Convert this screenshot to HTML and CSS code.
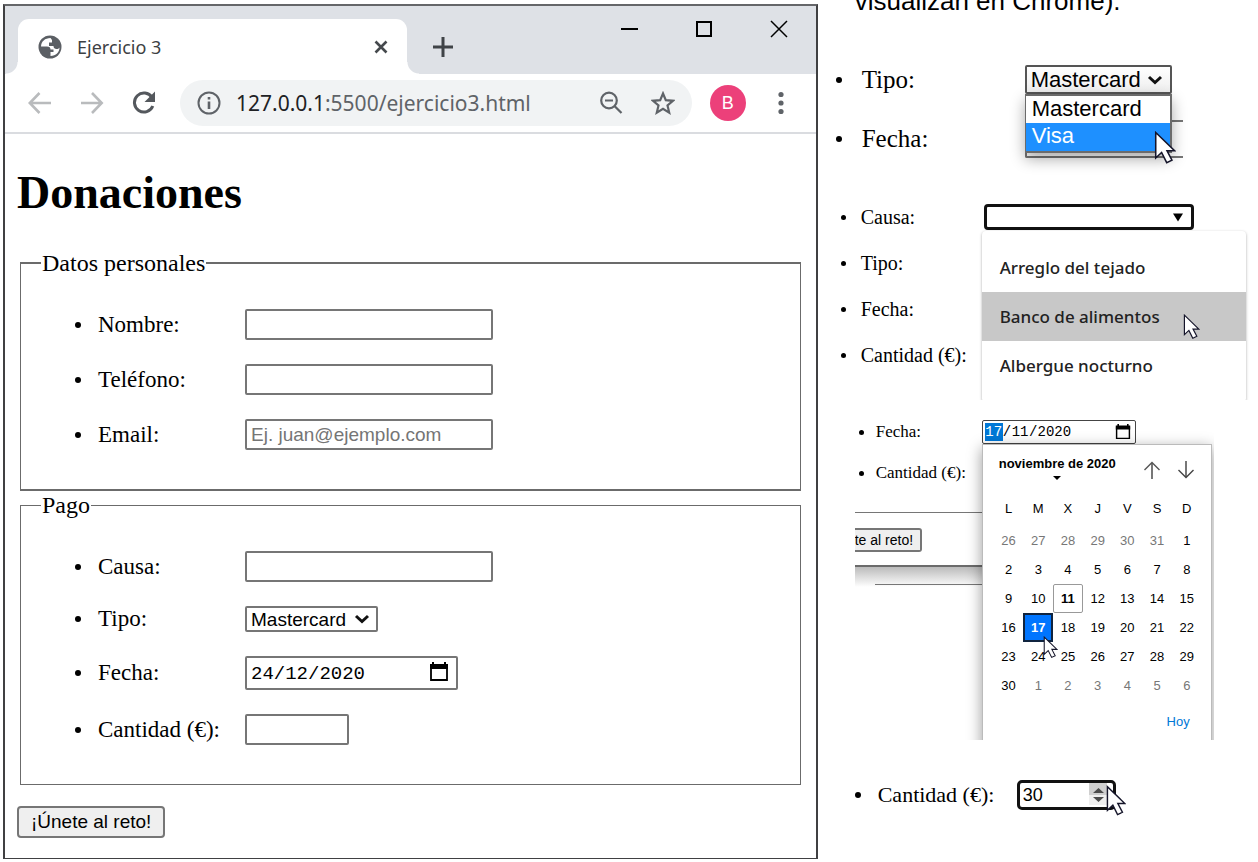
FILE: index.html
```html
<!DOCTYPE html>
<html lang="es">
<head>
<meta charset="utf-8">
<title>Ejercicio 3</title>
<link rel="stylesheet" href="styles.css">
</head>
<body>
<svg class="sprite" aria-hidden="true">
  <symbol id="cursor" viewBox="0 0 14 22"><path d="M1 1v16.500l3.800-3.600 3.300 6.600 3.400-1.600-3.200-6.100h4.900z" fill="#fff" stroke="#15152a" stroke-width="1"/></symbol>
  <symbol id="calendar" viewBox="0 0 20 20"><path d="M2 4h16v14H2z" fill="none" stroke="#000" stroke-width="1.800"/><path d="M1 2h18v5H1zM3 0h2v3H3zM15 0h2v3h-2z"/></symbol>
  <symbol id="chevron" viewBox="0 0 16 10"><path d="M2 2l6 5.500L14 2" fill="none" stroke="#111" stroke-width="3"/></symbol>
</svg>
<main class="page">
  <section class="window">
    <header class="tabstrip">
      <div class="tab">
        <svg class="i24" viewBox="0 0 24 24"><circle cx="12" cy="12" r="11.500" fill="#5b5f64"/><path d="M12.500 3C7 3 3.200 6.500 3 11.500h6c2.500 0 3.500 1 3.500 3h3v2.500h-3V21c5.500 0 9-4 9-8.500-1 1.500-2 1.700-3.500 1.500-1.800-.3-2.500-1.500-2.500-3h-4.500V7.500h3V5z" fill="#fff"/></svg>
        <span class="tab-title">Ejercicio 3</span>
        <button class="plain" aria-label="Cerrar pestaña"><svg class="i16" viewBox="0 0 16 16"><path d="M2.500 2.500l11 11M13.500 2.500l-11 11" stroke="#45494d" stroke-width="2.600"/></svg></button>
      </div>
      <button class="plain newtab" aria-label="Nueva pestaña"><svg class="i20" viewBox="0 0 20 20"><path d="M10 0v20M0 10h20" stroke="#3f4347" stroke-width="3"/></svg></button>
      <div class="controls">
        <button class="plain" aria-label="Minimizar"><svg class="i20" viewBox="0 0 20 20"><path d="M1 10h17" stroke="#000" stroke-width="2"/></svg></button>
        <button class="plain" aria-label="Maximizar"><svg class="i20" viewBox="0 0 20 20"><path d="M2 3h14v14H2z" stroke="#000" stroke-width="2" fill="none"/></svg></button>
        <button class="plain" aria-label="Cerrar"><svg class="i20" viewBox="0 0 20 20"><path d="M1 2l16 16M17 2L1 18" stroke="#000" stroke-width="1.500"/></svg></button>
      </div>
    </header>
    <nav class="toolbar">
      <button class="plain" aria-label="Atrás"><svg class="i24" viewBox="0 0 24 24"><path d="M23 12H2M11.500 2L1.800 12l9.700 10" fill="none" stroke="#b9bbbd" stroke-width="2.600"/></svg></button>
      <button class="plain" aria-label="Adelante"><svg class="i24" viewBox="0 0 24 24"><path d="M1 12h21M12 2l9.700 10L12 22" fill="none" stroke="#b9bbbd" stroke-width="2.600"/></svg></button>
      <button class="plain" aria-label="Recargar"><svg class="i24" viewBox="0 0 24 24"><path d="M20 6.500A9.500 9.500 0 1 0 20.800 15" fill="none" stroke="#54585d" stroke-width="3"/><path d="M23 .5v10.500H12.500z" fill="#54585d"/></svg></button>
      <div class="omnibox">
        <svg class="i24" viewBox="0 0 24 24"><circle cx="12" cy="12" r="10.500" fill="none" stroke="#5f6368" stroke-width="2"/><path d="M12 10.500V18M12 6v2.600" stroke="#5f6368" stroke-width="2.600"/></svg>
        <span class="url"><b>127.0.0.1</b>:5500/ejercicio3.html</span>
        <button class="plain" aria-label="Zoom"><svg class="i24" viewBox="0 0 24 24"><circle cx="10" cy="9.500" r="7.800" fill="none" stroke="#5f6368" stroke-width="2.200"/><path d="M15.500 15l7 7M6 9.500h8" stroke="#5f6368" stroke-width="2.200"/></svg></button>
        <button class="plain" aria-label="Favorito"><svg class="i24" viewBox="0 0 24 24"><path d="M12 2.500l2.800 6.700 7.200.6-5.500 4.700 1.700 7.100-6.200-3.800-6.200 3.800 1.700-7.100L2 9.800l7.200-.6z" fill="none" stroke="#5f6368" stroke-width="2.200"/></svg></button>
      </div>
      <button class="plain avatar">B</button>
      <button class="plain" aria-label="Menú"><svg class="i24" viewBox="0 0 24 24"><g fill="#5f6368"><circle cx="12" cy="3.500" r="2.600"/><circle cx="12" cy="12" r="2.600"/><circle cx="12" cy="20.500" r="2.600"/></g></svg></button>
    </nav>
    <form class="form">
      <h1>Donaciones</h1>
      <fieldset class="personal">
        <legend>Datos personales</legend>
        <ul class="rows">
          <li><label for="nombre">Nombre:</label><input class="field" id="nombre" type="text"></li>
          <li><label for="tel">Teléfono:</label><input class="field" id="tel" type="tel"></li>
          <li><label for="email">Email:</label><input class="field" id="email" type="email" placeholder="Ej. juan@ejemplo.com"></li>
        </ul>
      </fieldset>
      <fieldset>
        <legend>Pago</legend>
        <ul class="rows">
          <li><label for="causa">Causa:</label><input class="field" id="causa" type="text"></li>
          <li><label for="tipo">Tipo:</label><span class="select"><select id="tipo"><option>Mastercard</option><option>Visa</option></select><svg class="chevron"><use href="#chevron"/></svg></span></li>
          <li><label for="fecha">Fecha:</label><span class="date"><input id="fecha" type="text" value="24/12/2020"><svg class="i20"><use href="#calendar"/></svg></span></li>
          <li><label for="cantidad">Cantidad (€):</label><input class="field amount" id="cantidad" type="number"></li>
        </ul>
      </fieldset>
      <button class="submit" type="button">¡Únete al reto!</button>
    </form>
  </section>

  <aside class="samples">
    <p class="note">visualizan en Chrome).</p>

    <div class="sample sample-type">
      <ul class="rows">
        <li><label for="tipo2">Tipo:</label>
          <span class="select"><select id="tipo2"><option>Mastercard</option></select><svg class="chevron"><use href="#chevron"/></svg>
            <span class="options" role="listbox"><span role="option">Mastercard</span><span class="active" role="option">Visa</span></span>
            <svg class="cursor"><use href="#cursor"/></svg>
          </span></li>
        <li><label for="fecha2">Fecha:</label><input class="behind" id="fecha2" type="text"></li>
      </ul>
    </div>

    <div class="sample sample-cause">
      <ul class="rows">
        <li><label for="causa2">Causa:</label>
          <span class="combo"><input id="causa2" type="text"><svg class="triangle" viewBox="0 0 10 8"><path d="M0 0h10L5 8z"/></svg></span></li>
        <li>Tipo:</li>
        <li>Fecha:</li>
        <li>Cantidad (€):</li>
      </ul>
      <div class="suggestions" role="listbox">
        <div role="option">Arreglo del tejado</div>
        <div class="active" role="option">Banco de alimentos<svg class="cursor"><use href="#cursor"/></svg></div>
        <div role="option">Albergue nocturno</div>
      </div>
    </div>

    <div class="sample sample-date">
      <ul class="rows">
        <li><label for="dia">Fecha:</label>
          <span class="date"><input class="day" id="dia" type="text" value="17">/<input class="month" aria-label="Mes" type="text" value="11">/<input class="year" aria-label="Año" type="text" value="2020"><svg class="i16"><use href="#calendar"/></svg></span></li>
        <li>Cantidad (€):</li>
      </ul>
      <div class="form-end"><button class="submit" type="button">te al reto!</button></div>
      <div class="window-shadow"></div>
      <div class="picker">
        <div class="picker-head">
          <button class="plain month-name">noviembre de 2020<svg class="caret" viewBox="0 0 8 4"><path d="M0 0h8L4 4z"/></svg></button>
          <button class="plain" aria-label="Mes anterior"><svg class="i18" viewBox="0 0 18 18"><path d="M9 18V2" stroke="#777" stroke-width="2"/><path d="M1.500 9L9 1.500 16.500 9" fill="none" stroke="#555" stroke-width="1.400"/></svg></button>
          <button class="plain" aria-label="Mes siguiente"><svg class="i18" viewBox="0 0 18 18"><path d="M9 0v16" stroke="#777" stroke-width="2"/><path d="M1.500 9L9 16.500 16.500 9" fill="none" stroke="#444" stroke-width="1.400"/></svg></button>
        </div>
        <table>
          <thead><tr><th>L</th><th>M</th><th>X</th><th>J</th><th>V</th><th>S</th><th>D</th></tr></thead>
          <tbody>
            <tr><td class="out">26</td><td class="out">27</td><td class="out">28</td><td class="out">29</td><td class="out">30</td><td class="out">31</td><td>1</td></tr>
            <tr><td>2</td><td>3</td><td>4</td><td>5</td><td>6</td><td>7</td><td>8</td></tr>
            <tr><td>9</td><td>10</td><td class="today">11</td><td>12</td><td>13</td><td>14</td><td>15</td></tr>
            <tr><td>16</td><td class="chosen">17<svg class="cursor"><use href="#cursor"/></svg></td><td>18</td><td>19</td><td>20</td><td>21</td><td>22</td></tr>
            <tr><td>23</td><td>24</td><td>25</td><td>26</td><td>27</td><td>28</td><td>29</td></tr>
            <tr><td>30</td><td class="out">1</td><td class="out">2</td><td class="out">3</td><td class="out">4</td><td class="out">5</td><td class="out">6</td></tr>
          </tbody>
        </table>
        <button class="plain go-today">Hoy</button>
      </div>
    </div>

    <div class="sample sample-amount">
      <ul class="rows">
        <li><label for="cantidad2">Cantidad (€):</label>
          <span class="spin"><input id="cantidad2" type="number" value="30">
            <svg class="spinner" viewBox="0 0 18 24"><path d="M0 0h18v12H0z" fill="#cfcfcf"/><path d="M0 12h18v10H0z" fill="#efefef"/><path d="M4 10h11L9.500 5zM4 14h11l-5.500 5z" fill="#4c4c4c"/></svg>
            <svg class="cursor"><use href="#cursor"/></svg>
          </span></li>
      </ul>
    </div>
  </aside>
</main>
</body>
</html>
```
FILE: styles.css
```css
* { box-sizing: border-box; }

body {
  margin: 0;
  background: #fff;
  color: #000;
  font-family: "Liberation Serif", serif;
  overflow: hidden;
}

button, input, select { font-family: "Liberation Sans", sans-serif; color: #000; }
input[type="number"] { appearance: textfield; }
h1, ul, p { margin: 0; padding: 0; }

.sprite { position: absolute; width: 0; height: 0; }
.plain { border: 0; padding: 0; background: none; display: flex; }
svg { display: block; flex: none; }
.i16 { width: 16px; height: 16px; }
.i18 { width: 18px; height: 18px; }
.i20 { width: 20px; height: 20px; }
.i24 { width: 24px; height: 24px; }

.page { display: grid; grid-template-columns: 65fr 35fr; align-items: start; }

/* Browser window */
.window {
  margin: 4px 0 0 3px;
  border: 2px solid #404042;
  border-top-color: #656669;
  border-bottom-width: 1px;
}
.tabstrip {
  display: flex;
  align-items: center;
  height: 68px;
  padding: 13px 26px 0 13px;
  background: #dee1e6;
}
.tab {
  position: relative;
  display: flex;
  align-items: center;
  width: 389px;
  height: 55px;
  padding: 0 18px 0 20px;
  border-radius: 11px 11px 0 0;
  background: #fff;
}
.tab::before, .tab::after {
  content: "";
  position: absolute;
  bottom: 0;
  width: 12px;
  height: 12px;
}
.tab::before { right: 100%; background: radial-gradient(circle at 0 0, transparent 11px, #fff 12px); }
.tab::after { left: 100%; background: radial-gradient(circle at 100% 0, transparent 11px, #fff 12px); }
.tab-title {
  flex: 1;
  padding-left: 15px;
  color: #3c4043;
  font: 18px/24px "Noto Sans", sans-serif;
}
.newtab { margin-left: 26px; }
.controls { display: flex; gap: 55px; margin-left: auto; align-self: flex-start; }

.toolbar {
  display: flex;
  align-items: center;
  height: 60px;
  padding: 0 23px 0 23px;
  border-bottom: 2px solid #dadce0;
  gap: 28px;
}
.omnibox {
  display: flex;
  flex: 1;
  align-items: center;
  height: 46px;
  margin: 0 -10px 0 -4px;
  padding: 0 17px;
  border-radius: 23px;
  background: #f1f3f4;
  gap: 28px;
}
.url {
  flex: 1;
  margin-left: -13px;
  color: #5f6368;
  font: 21px/28px "Noto Sans", sans-serif;
}
.url b { color: #202124; font-weight: 400; }
.avatar {
  align-items: center;
  justify-content: center;
  width: 36px;
  height: 36px;
  margin-right: -5px;
  border-radius: 50%;
  background: #ec407a;
  color: #fff;
  font-size: 18px;
}

/* Shared bulleted rows */
.rows {
  display: flex;
  flex-direction: column;
  gap: var(--row-gap);
  list-style: none;
}
.rows li {
  display: grid;
  grid-template-columns: var(--bullet) var(--label) auto;
  align-items: center;
  justify-content: start;
  min-height: var(--row-height);
  white-space: nowrap;
}
.rows li::before {
  content: "";
  width: var(--dot);
  height: var(--dot);
  border-radius: 50%;
  background: #000;
}

/* Donation form */
.form {
  --bullet: 23px;
  --label: 147px;
  --row-gap: 24px;
  --row-height: 26px;
  --dot: 6px;
  padding: 33px 12px 20px;
  font-size: 23px;
}
h1 { margin-bottom: 30px; font-size: 46px; line-height: 52px; }
fieldset { margin: 0 3px; padding: 0 20px; border: 1px solid #6b6b6b; }
.personal { border-width: 2px 1px; }
legend { padding: 0 1px; font-size: 24px; line-height: 28px; }
fieldset .rows { padding: 32px 0 39px 34px; }

.field, .form .date, .form select {
  height: 31px;
  border: 2px solid #767676;
  border-radius: 2px;
  background: #fff;
}
.field { width: 248px; padding: 0 4px; font-size: 19px; }
.field::placeholder { color: #757575; opacity: 1; }
.amount { width: 104px; }

.select { position: relative; display: block; width: 133px; }
.select select { width: 100%; margin: 0; padding: 0 4px; appearance: none; font-size: 19px; display: block; }
.form select { height: 26px; }
.chevron { position: absolute; right: 8px; top: 50%; margin-top: -5px; width: 16px; height: 10px; }

.date { display: flex; align-items: center; font-family: "Liberation Mono", monospace; }
.date input { border: 0; padding: 0; background: none; font: inherit; min-width: 0; }
.form .date { width: 213px; height: 34px; padding: 0 7px 2px 4px; font-size: 19px; }
.form .date input { flex: 1; padding-top: 4px; }

.submit {
  display: block;
  height: 32px;
  border: 2px solid #767676;
  border-radius: 4px;
  background: #efefef;
  padding: 0 12px;
  font-size: 19px;
}
.form .submit { margin-top: 21px; }

/* Samples of open controls */
.note {
  margin-top: -13px;
  padding-left: 37px;
  font: 26px/28px "Liberation Sans", sans-serif;
}
.sample { position: relative; }
.cursor { position: absolute; z-index: 2; }

.sample-type {
  --bullet: 26px;
  --label: 163px;
  --row-gap: 26px;
  --row-height: 29px;
  --dot: 6px;
  padding: 50px 0 0 18px;
  font-size: 25px;
}
.sample-type .select { width: 147px; }
.sample-type select {
  height: 29px;
  border: 2px solid #555;
  border-radius: 2px;
  background: linear-gradient(#fff, #eee);
  font-size: 22px;
}
.options {
  position: absolute;
  z-index: 1;
  top: 100%;
  left: 0;
  right: 0;
  border: 2px solid #6b6b6b;
  border-left-width: 1px;
  background: #fff;
  box-shadow: 0 6px 14px #0005;
  font: 22px/25px "Liberation Sans", sans-serif;
}
.options span { display: block; height: 27px; padding-left: 6px; }
.options .active { height: 28px; background: #1e90ff; color: #fff; }
.sample-type .cursor { top: 66px; left: 129px; width: 22px; height: 34px; }
.sample-type .chevron { right: 9px; }
.behind { width: 158px; height: 38px; border: 2px solid #767676; border-right: 0; border-radius: 2px 0 0 2px; }

.sample-cause {
  --bullet: 20px;
  --label: 123px;
  --row-gap: 20px;
  --row-height: 26px;
  --dot: 5px;
  height: 242px;
  margin: 0 9px 0 23px;
  padding-top: 46px;
  overflow: hidden;
  font-size: 20px;
}
.combo {
  display: flex;
  align-items: center;
  width: 210px;
  height: 26px;
  padding-right: 8px;
  border: 3px solid #111;
  border-radius: 4px;
}
.combo input { flex: 1; min-width: 0; height: 18px; border: 0; background: none; }
.triangle { width: 10px; height: 9px; }
.suggestions {
  position: absolute;
  top: 73px;
  left: 141px;
  right: 3px;
  padding: 12px 0;
  border-radius: 4px;
  background: #fff;
  box-shadow: 0 1px 3px #0005;
  color: #222;
  font: 500 17px/49px "Noto Sans", sans-serif;
}
.suggestions div { position: relative; padding-left: 18px; }
.suggestions .active { background: #c8c8c8; }
.sample-cause .cursor { top: 22px; left: 201px; width: 17px; height: 26px; }

.sample-date {
  --bullet: 17px;
  --label: 106px;
  --row-gap: 17px;
  --row-height: 24px;
  --dot: 5px;
  width: 359px;
  height: 325px;
  margin: 15px 0 0 37px;
  padding-top: 5px;
  overflow: hidden;
  font-size: 17px;
}
.sample-date .rows { padding-left: 4px; }
.sample-date .date {
  width: 154px;
  height: 24px;
  padding: 0 4px 0 2px;
  border: 1px solid #444;
  border-radius: 2px;
  background: #fff;
  font-size: 14px;
}
.sample-date .date svg { margin-left: auto; }
.day, .month { width: 18px; text-align: center; }
.sample-date .day { height: 18px; background: #0078d7; color: #fff; }
.year { width: 38px; }
.form-end, .window-shadow { width: 127px; }
.form-end { margin-top: 27px; padding: 15px 0 13px; border-top: 1px solid #767676; border-bottom: 2px solid #6b6b6b; }
.form-end .submit {
  height: 24px;
  padding: 0 7px 0 0;
  border-left: 0;
  border-radius: 0 3px 3px 0;
  font-size: 14px;
}
.window-shadow { height: 20px; background: linear-gradient(#bbb, #fff); }
.window-shadow::after { content: ""; display: block; height: 17px; margin-left: 20px; border-bottom: 1px solid #767676; }
.picker {
  position: absolute;
  top: 29px;
  left: 127px;
  width: 230px;
  height: 310px;
  padding: 9px 9px 0 11px;
  border: 1px solid #bbb;
  background: #fff;
  box-shadow: 0 4px 14px #0006;
  font: 13px/20px "Liberation Sans", sans-serif;
}
.picker-head { display: flex; gap: 16px; padding: 0 7px 11px 5px; }
.month-name { flex: 1; flex-direction: column; align-items: flex-start; font: bold 13px/20px "Liberation Sans", sans-serif; }
.month-name .caret { width: 8px; height: 4px; margin: 2px 0 0 54px; }
.picker-head .i18 { margin-top: 7px; }
table { width: 100%; border-collapse: separate; border-spacing: 0; table-layout: fixed; }
th { height: 35px; padding: 0; font-weight: 400; }
td { position: relative; height: 29px; padding: 0; text-align: center; }
.out { color: #777; }
.today { border: 1px solid #999; border-radius: 2px; font-weight: 700; }
.chosen { border: 2px solid #10243f; background: #0075ff; color: #fff; font-weight: 700; }
.sample-date .cursor { top: 21px; left: 18px; width: 15px; height: 23px; }
.go-today { margin: 14px 12px 0 auto; color: #0078d7; font-size: 13px; }

.sample-amount {
  --bullet: 23px;
  --label: 139px;
  --row-height: 30px;
  --dot: 6px;
  padding: 40px 0 0 37px;
  font-size: 22px;
}
.spin {
  position: relative;
  display: flex;
  width: 99px;
  height: 30px;
  padding-right: 6px;
  border: 3px solid #111;
  border-radius: 5px;
}
.spin input { flex: 1; min-width: 0; padding: 0 3px; border: 0; background: none; font-size: 18px; }
.spinner { width: 18px; height: 24px; }
.sample-amount .cursor { top: 2px; left: 86px; width: 20px; height: 32px; }
```
